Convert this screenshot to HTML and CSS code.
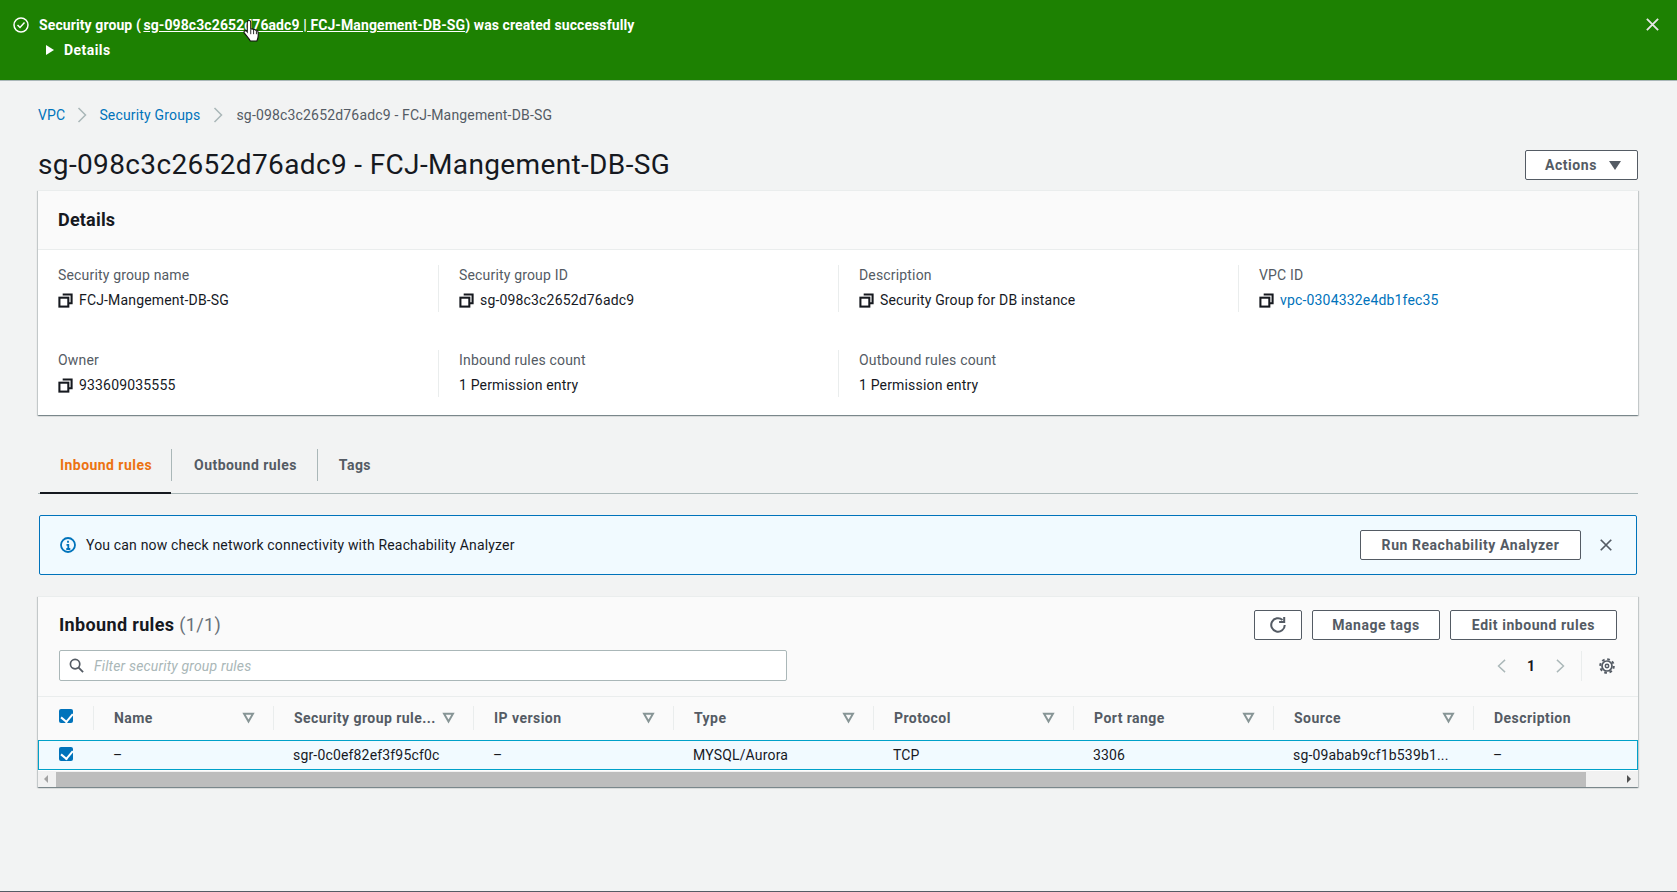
FILE: index.html
```html
<!DOCTYPE html>
<html lang="en">
<head>
    <meta charset="UTF-8">
    <title>Security group details</title>
    <link rel="stylesheet" href="styles.css">
</head>
<body>
    <svg class="sprites" width="0" height="0">
        <symbol id="copy" viewBox="0 0 16 16">
            <path d="M5 1.500h9.500V11H11" fill="none" stroke="currentColor" stroke-width="2.200"/>
            <rect x="1.500" y="5" width="9.500" height="9.500" fill="none" stroke="currentColor" stroke-width="2.200"/>
        </symbol>
        <symbol id="funnel" viewBox="0 0 16 16">
            <path d="M2.500 3.500h11L8 13z" fill="none" stroke="currentColor" stroke-width="2.400"/>
        </symbol>
        <symbol id="close" viewBox="0 0 16 16">
            <path d="M2 2l12 12M14 2L2 14" fill="none" stroke="currentColor" stroke-width="2"/>
        </symbol>
        <symbol id="crumb" viewBox="0 0 16 16">
            <path d="M4.500 1l7 7-7 7" fill="none" stroke="currentColor" stroke-width="1.500"/>
        </symbol>
    </svg>

    <div class="flash">
        <svg class="flash-icon" viewBox="0 0 16 16"><circle cx="8" cy="8" r="7" fill="none" stroke="currentColor" stroke-width="1.500"/><path d="M4.500 8l2.500 2.500 4.500-5" fill="none" stroke="currentColor" stroke-width="1.500"/></svg>
        <div class="flash-body">
            <div class="flash-title">Security group (<a href="#">sg-098c3c2652d76adc9 | FCJ-Mangement-DB-SG</a>) was created successfully</div>
            <div class="flash-details"><span class="caret"></span>Details</div>
        </div>
        <svg class="flash-close"><use href="#close"/></svg>
        <svg class="pointer" viewBox="1 1 15.500 22"><path d="M6 1.500c1 0 1.600.7 1.600 1.700v6.200l1-.2c.7-.1 1.300.1 1.600.6.7-.3 1.400-.1 1.800.5.8-.3 1.600 0 2 .7.4 1 .5 2.800.4 4.600-.1 2-.6 3.400-1.200 4.600H7.200c-.8-1.400-1.900-2.800-3.200-4.400L1.800 13c-.5-.8-.4-1.600.2-2 .7-.4 1.500-.2 2.100.5l.3.4V3.200C4.400 2.200 5 1.500 6 1.500z" fill="#fff" stroke="#111" stroke-width="1"/><path d="M7.600 10v4M10.200 10v4M12.800 10.500V14" stroke="#111" stroke-width=".8"/></svg>
    </div>

    <main class="content">
        <nav class="crumbs">
            <a href="#">VPC</a>
            <svg class="crumb-sep"><use href="#crumb"/></svg>
            <a href="#">Security Groups</a>
            <svg class="crumb-sep"><use href="#crumb"/></svg>
            <span>sg-098c3c2652d76adc9 - FCJ-Mangement-DB-SG</span>
        </nav>

        <div class="page-head">
            <h1>sg-098c3c2652d76adc9 - FCJ-Mangement-DB-SG</h1>
            <button class="btn btn-actions">Actions<span class="btn-caret"></span></button>
        </div>

        <section class="card details">
            <h2 class="details-title">Details</h2>
            <div class="details-grid">
                <div class="field">
                    <div class="field-label">Security group name</div>
                    <div class="field-value"><svg class="copy"><use href="#copy"/></svg>FCJ-Mangement-DB-SG</div>
                </div>
                <div class="field">
                    <div class="field-label">Security group ID</div>
                    <div class="field-value"><svg class="copy"><use href="#copy"/></svg>sg-098c3c2652d76adc9</div>
                </div>
                <div class="field">
                    <div class="field-label">Description</div>
                    <div class="field-value"><svg class="copy"><use href="#copy"/></svg>Security Group for DB instance</div>
                </div>
                <div class="field">
                    <div class="field-label">VPC ID</div>
                    <div class="field-value"><svg class="copy"><use href="#copy"/></svg><a href="#">vpc-0304332e4db1fec35</a></div>
                </div>
                <div class="field">
                    <div class="field-label">Owner</div>
                    <div class="field-value"><svg class="copy"><use href="#copy"/></svg>933609035555</div>
                </div>
                <div class="field">
                    <div class="field-label">Inbound rules count</div>
                    <div class="field-value">1 Permission entry</div>
                </div>
                <div class="field">
                    <div class="field-label">Outbound rules count</div>
                    <div class="field-value">1 Permission entry</div>
                </div>
            </div>
        </section>

        <div class="tabs">
            <a class="tab tab-active" href="#">Inbound rules</a>
            <a class="tab" href="#">Outbound rules</a>
            <a class="tab" href="#">Tags</a>
        </div>

        <div class="info">
            <svg class="info-icon" viewBox="0 0 16 16"><circle cx="8" cy="8" r="7" fill="none" stroke="currentColor" stroke-width="1.800"/><path d="M8 3.800v2M6.500 7.800H8.300V12M6.300 12h4" fill="none" stroke="currentColor" stroke-width="1.800"/></svg>
            <span class="info-text">You can now check network connectivity with Reachability Analyzer</span>
            <button class="btn btn-run">Run Reachability Analyzer</button>
            <svg class="info-close"><use href="#close"/></svg>
        </div>

        <section class="card rules">
            <div class="rules-head">
                <div class="rules-top">
                    <h2 class="rules-title">Inbound rules <span class="rules-count">(1/1)</span></h2>
                    <div class="rules-actions">
                        <button class="btn btn-icon"><svg viewBox="0 0 16 16"><path d="M14 8a6 6 0 1 1-2-4.500" fill="none" stroke="currentColor" stroke-width="1.800"/><path d="M13.500 .8v4.500H9" fill="none" stroke="currentColor" stroke-width="1.800"/></svg></button>
                        <button class="btn btn-manage">Manage tags</button>
                        <button class="btn btn-edit">Edit inbound rules</button>
                    </div>
                </div>
                <div class="rules-tools">
                    <div class="filter">
                        <svg viewBox="0 0 16 16"><circle cx="6.500" cy="6.500" r="5" fill="none" stroke="currentColor" stroke-width="1.800"/><path d="M10 10l5 5" stroke="currentColor" stroke-width="2"/></svg>
                        <span>Filter security group rules</span>
                    </div>
                    <div class="pager">
                        <svg class="pager-arrow" viewBox="0 0 16 16"><path d="M11.500 1L4 8l7.500 7" fill="none" stroke="currentColor" stroke-width="1.600"/></svg>
                        <span class="pager-num">1</span>
                        <svg class="pager-arrow" viewBox="0 0 16 16"><path d="M4.500 1L12 8l-7.500 7" fill="none" stroke="currentColor" stroke-width="1.600"/></svg>
                        <div class="pager-sep"></div>
                        <svg class="gear" viewBox="0 0 16 16"><circle cx="8" cy="8" r="5" fill="none" stroke="currentColor" stroke-width="1.700"/><circle cx="8" cy="8" r="6.800" fill="none" stroke="currentColor" stroke-width="2" stroke-dasharray="2.700 2.640"/><circle cx="8" cy="8" r="1.700" fill="none" stroke="currentColor" stroke-width="1.500"/></svg>
                    </div>
                </div>
            </div>

            <div class="table">
                <div class="row row-head">
                    <div class="cell cell-check"><span class="checkbox"></span></div>
                    <div class="cell">Name<svg class="funnel"><use href="#funnel"/></svg></div>
                    <div class="cell">Security group rule...<svg class="funnel"><use href="#funnel"/></svg></div>
                    <div class="cell">IP version<svg class="funnel"><use href="#funnel"/></svg></div>
                    <div class="cell">Type<svg class="funnel"><use href="#funnel"/></svg></div>
                    <div class="cell">Protocol<svg class="funnel"><use href="#funnel"/></svg></div>
                    <div class="cell">Port range<svg class="funnel"><use href="#funnel"/></svg></div>
                    <div class="cell">Source<svg class="funnel"><use href="#funnel"/></svg></div>
                    <div class="cell">Description</div>
                </div>
                <div class="row row-selected">
                    <div class="cell cell-check"><span class="checkbox"></span></div>
                    <div class="cell">–</div>
                    <div class="cell">sgr-0c0ef82ef3f95cf0c</div>
                    <div class="cell">–</div>
                    <div class="cell">MYSQL/Aurora</div>
                    <div class="cell">TCP</div>
                    <div class="cell">3306</div>
                    <div class="cell">sg-09abab9cf1b539b1...</div>
                    <div class="cell">–</div>
                </div>
            </div>

            <div class="scrollbar">
                <span class="scroll-arrow scroll-left"></span>
                <div class="scroll-track"><div class="scroll-thumb"></div></div>
                <span class="scroll-arrow scroll-right"></span>
            </div>
        </section>
    </main>
</body>
</html>
```

FILE: styles.css
```css
* {
    box-sizing: border-box;
}
html, body {
    height: 100%;
}
body {
    font-family: Roboto, "Liberation Sans", sans-serif;
    font-size: 14px;
    line-height: 20px;
    letter-spacing: .17px;
    margin: 0;
    color: #16191f;
    background-color: #f2f3f3;
    border-bottom: 1px solid #545b64;
    overflow: hidden;
}
a {
    color: #0073bb;
    text-decoration: none;
}
svg {
    display: block;
    flex: none;
}
.sprites {
    position: absolute;
}

/* flash bar */
.flash {
    position: relative;
    display: flex;
    height: 81px;
    padding: 15px 0 0 13px;
    color: #fff;
    background-color: #1d8102;
    border-bottom: 1px solid #aab7b8;
    font-weight: 700;
    letter-spacing: .1px;
}
.flash-icon {
    width: 16px;
    height: 16px;
    margin: 2px 10px 0 0;
}
.flash-title a {
    margin-left: 2.500px;
    color: #fff;
    text-decoration: underline;
}
.flash-details {
    display: flex;
    align-items: center;
    margin-top: 5px;
    padding-left: 7px;
    letter-spacing: .45px;
}
.caret {
    width: 0;
    height: 0;
    margin-right: 10px;
    border-left: 8px solid #fff;
    border-top: 5.500px solid transparent;
    border-bottom: 5.500px solid transparent;
}
.flash-close {
    width: 15px;
    height: 15px;
    margin: 2px 17px 0 auto;
    color: #e6e6e6;
}
.pointer {
    position: absolute;
    left: 243px;
    top: 20px;
    width: 18px;
    height: 24px;
}

/* page */
.content {
    padding: 24px 39px 0 38px;
}
.crumbs {
    display: flex;
    align-items: center;
    height: 20px;
    color: #545b64;
}
.crumb-sep {
    width: 16px;
    height: 16px;
    margin: 0 10px;
    color: #aab7b8;
}
.crumb-sep:first-of-type {
    margin: 0 9px;
}
.page-head {
    display: flex;
    justify-content: space-between;
    align-items: flex-end;
    height: 63px;
    margin-top: 1px;
}
h1 {
    margin: 0 0 6px;
    font-size: 28px;
    line-height: 36px;
    font-weight: 400;
    letter-spacing: .36px;
}
.btn {
    height: 30px;
    padding: 0;
    font-family: inherit;
    font-size: 14px;
    font-weight: 700;
    letter-spacing: .55px;
    color: #545b64;
    background-color: #fff;
    border: 1px solid #545b64;
    border-radius: 2px;
}
.btn-actions {
    display: flex;
    align-items: center;
    justify-content: center;
    width: 113px;
    height: 30px;
    margin-bottom: 9px;
    padding-left: 3px;
    gap: 12px;
}
.btn-caret {
    width: 0;
    height: 0;
    border-top: 9px solid #545b64;
    border-left: 6px solid transparent;
    border-right: 6px solid transparent;
}

/* details card */
.card {
    background-color: #fff;
    box-shadow: 0 1px 1px 0 rgba(0, 28, 36, 0.3), 1px 1px 1px 0 rgba(0, 28, 36, 0.15), -1px 1px 1px 0 rgba(0, 28, 36, 0.15);
    border-top: 1px solid #eaeded;
}
.details {
    width: 1600px;
    height: 225px;
    margin-top: 1px;
}
.details-title {
    height: 59px;
    margin: 0;
    padding: 18px 20px 0;
    font-size: 18px;
    line-height: 22px;
    font-weight: 700;
    letter-spacing: .2px;
    background-color: #fafafa;
    border-bottom: 1px solid #eaeded;
}
.details-grid {
    display: grid;
    grid-template-columns: repeat(4, 400px);
    grid-auto-rows: 47px;
    row-gap: 38px;
    padding-top: 15px;
}
.field {
    padding-left: 20px;
    border-left: 1px solid #eaeded;
}
.field:nth-child(4n+1) {
    border-left: 0;
}
.field-label {
    color: #545b64;
}
.field-value {
    display: flex;
    align-items: center;
    gap: 6px;
    margin-top: 5px;
}
.copy {
    width: 15px;
    height: 15px;
    color: #16191f;
}

/* tabs */
.tabs {
    display: flex;
    align-items: center;
    height: 70px;
    margin-top: 9px;
    padding: 12px 0 0 1px;
    border-bottom: 1px solid #aab7b8;
    font-weight: 700;
    letter-spacing: .45px;
}
.tab {
    position: relative;
    padding: 0 20px 0 21px;
    line-height: 32px;
    color: #545b64;
    border-left: 1px solid #aab7b8;
}
.tab:first-child {
    padding-right: 19px;
    border-left: 0;
}
.tab:nth-child(2) {
    padding-left: 22px;
}
.tab-active {
    color: #ec7211;
}
.tab-active::after {
    content: "";
    position: absolute;
    left: 1px;
    right: 0;
    bottom: -13px;
    height: 2px;
    background-color: #16191f;
}

/* info box */
.info {
    display: flex;
    align-items: center;
    width: 1598px;
    height: 60px;
    margin: 21px 0 0 1px;
    padding: 0 20px;
    background-color: #f1faff;
    border: 1px solid #0073bb;
    border-radius: 2px;
}
.info-icon {
    width: 16px;
    height: 16px;
    margin-right: 10px;
    color: #0073bb;
}
.info-text {
    flex: 1;
}
.btn-run {
    width: 221px;
}
.info-close {
    width: 14px;
    height: 14px;
    margin: 0 3px 0 18px;
    color: #545b64;
}

/* rules table */
.rules {
    width: 1600px;
    margin-top: 21px;
    background-color: #fff;
}
.rules-head {
    height: 100px;
    padding: 13px 21px 0;
    background-color: #fafafa;
    border-bottom: 1px solid #eaeded;
}
.rules-top {
    display: flex;
    justify-content: space-between;
    align-items: center;
}
.rules-title {
    margin: 0;
    font-size: 18px;
    line-height: 30px;
    font-weight: 700;
    letter-spacing: .35px;
}
.rules-count {
    font-weight: 400;
    color: #687078;
}
.rules-actions {
    display: flex;
    gap: 10px;
}
.btn-icon {
    width: 48px;
}
.btn-icon svg {
    width: 18px;
    height: 18px;
    margin: 0 auto;
}
.btn-manage {
    width: 128px;
}
.btn-edit {
    width: 167px;
}
.rules-tools {
    display: flex;
    justify-content: space-between;
    align-items: center;
    margin-top: 10px;
}
.filter {
    display: flex;
    align-items: center;
    width: 728px;
    height: 31px;
    padding-left: 9px;
    background-color: #fff;
    border: 1px solid #aab7b8;
    border-radius: 2px;
    color: #687078;
    gap: 10px;
}
.filter svg {
    width: 15px;
    height: 15px;
    color: #545b64;
}
.filter span {
    font-style: italic;
    color: #aab7b8;
}
.pager {
    display: flex;
    align-items: center;
    height: 30px;
}
.pager-arrow {
    width: 14px;
    height: 14px;
    color: #aab7b8;
}
.pager-num {
    width: 44px;
    text-align: center;
    font-weight: 700;
}
.pager-sep {
    width: 1px;
    height: 30px;
    margin: 0 17px 0 14px;
    background-color: #eaeded;
}
.gear {
    width: 16px;
    height: 16px;
    margin-right: 2px;
    color: #545b64;
}
.row {
    display: grid;
    grid-template-columns: 55px 180px repeat(6, 200px) auto;
    align-items: center;
}
.row-head {
    height: 43px;
    padding-bottom: 2px;
    font-weight: 700;
    letter-spacing: .45px;
    color: #545b64;
    background-color: #fafafa;
}
.row-head .cell {
    height: 24px;
    padding-right: 18px;
    border-left: 1px solid #eaeded;
}
.row-head .cell-check {
    border-left: 0;
}
.cell {
    display: flex;
    align-items: center;
    justify-content: space-between;
    padding: 0 19px 0 20px;
    white-space: nowrap;
}
.cell-check {
    padding: 0 0 0 21px;
}
.checkbox {
    position: relative;
    width: 14px;
    height: 14px;
    margin-top: -3px;
    background-color: #0073bb;
    border-radius: 2px;
}
.checkbox::after {
    content: "";
    position: absolute;
    left: 4px;
    top: 1.500px;
    width: 6px;
    height: 9px;
    border: solid #fff;
    border-width: 0 2px 2px 0;
    transform: rotate(40deg);
}
.funnel {
    width: 13px;
    height: 13px;
    color: #879596;
}
.row-selected {
    height: 30px;
    margin-bottom: 1px;
    background-color: #f1faff;
    box-shadow: inset 0 0 0 1px #00a1c9;
}

/* scrollbar */
.scrollbar {
    display: flex;
    align-items: center;
    height: 16px;
    background-color: #f1f1f1;
}
.scroll-arrow {
    width: 0;
    height: 0;
    border-top: 4px solid transparent;
    border-bottom: 4px solid transparent;
}
.scroll-left {
    margin: 0 8px 0 6px;
    border-right: 4px solid #a3a3a3;
}
.scroll-right {
    margin: 0 7px 0 6px;
    border-left: 4px solid #505050;
}
.scroll-track {
    flex: 1;
    height: 15px;
}
.scroll-thumb {
    width: 1530px;
    height: 100%;
    background-color: #bdbdbd;
}
```
